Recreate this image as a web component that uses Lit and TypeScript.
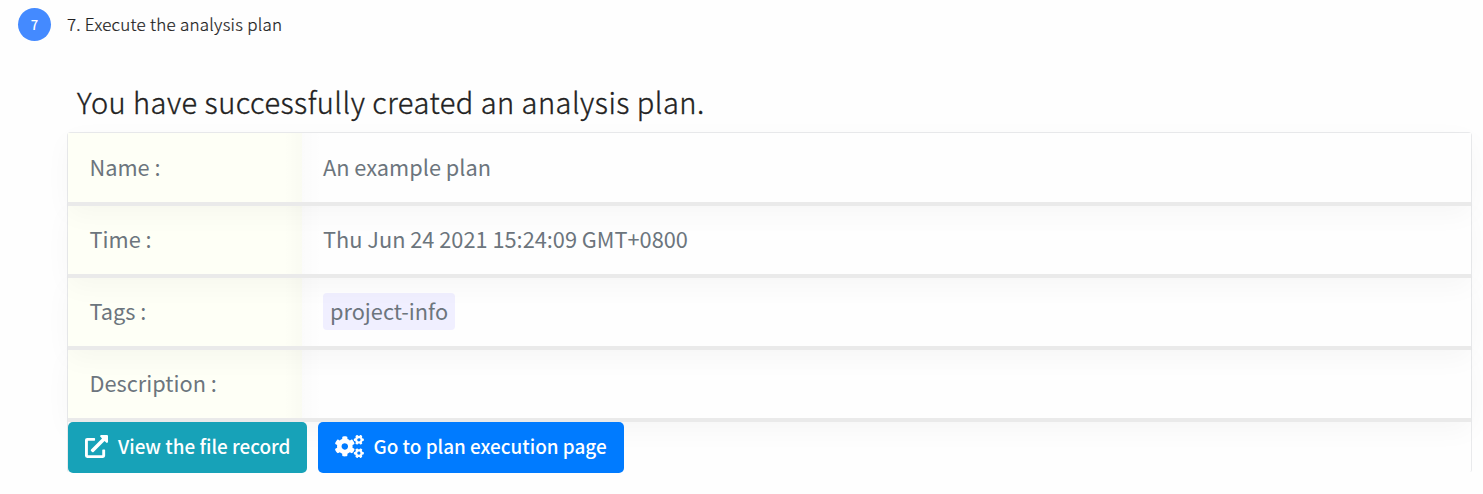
import { LitElement, html, css, svg } from "lit";
import { customElement } from "lit/decorators.js";

const SMALL_GEAR =
  "M512.1 191l-8.2 14.3c-3 5.3-9.4 7.5-15.1 5.4-11.8-4.4-22.6-10.7-32.1-18.6-4.6-3.8-5.8-10.5-2.8-15.7l8.2-14.3c-6.9-8-12.3-17.3-15.9-27.4h-16.5c-6 0-11.2-4.3-12.2-10.3-2-12-2.1-24.6 0-37.1 1-6 6.2-10.4 12.2-10.4h16.5c3.6-10.1 9-19.4 15.9-27.4l-8.2-14.3c-3-5.2-1.9-11.9 2.8-15.7 9.5-7.9 20.4-14.2 32.1-18.6 5.7-2.1 12.1.1 15.1 5.4l8.2 14.3c10.5-1.9 21.2-1.9 31.7 0L552 6.3c3-5.3 9.4-7.5 15.1-5.4 11.8 4.4 22.6 10.7 32.1 18.6 4.6 3.8 5.8 10.5 2.8 15.7l-8.2 14.3c6.9 8 12.3 17.3 15.9 27.4h16.5c6 0 11.2 4.3 12.2 10.3 2 12 2.1 24.6 0 37.1-1 6-6.2 10.4-12.2 10.4h-16.5c-3.6 10.1-9 19.4-15.9 27.4l8.2 14.3c3 5.2 1.9 11.9-2.8 15.7-9.5 7.9-20.4 14.2-32.1 18.6-5.7 2.1-12.1-.1-15.1-5.4l-8.2-14.3c-10.4 1.9-21.2 1.9-31.7 0zm-10.5-58.8c38.5 29.6 82.4-14.3 52.8-52.8-38.5-29.7-82.4 14.3-52.8 52.8z";
const LARGE_GEAR =
  "M386.3 286.1l33.7 16.8c10.1 5.8 14.5 18.1 10.5 29.1-8.9 24.2-26.4 46.4-42.6 65.8-7.4 8.9-20.2 11.1-30.3 5.3l-29.1-16.8c-16 13.7-34.6 24.6-54.9 31.7v33.6c0 11.6-8.3 21.6-19.7 23.6-24.6 4.2-50.4 4.4-75.9 0-11.5-2-20-11.9-20-23.6V418c-20.3-7.2-38.9-18-54.9-31.7L74 403c-10 5.8-22.9 3.6-30.3-5.3-16.2-19.4-33.3-41.6-42.2-65.7-4-10.9.4-23.2 10.5-29.1l33.3-16.8c-3.9-20.9-3.9-42.4 0-63.4L12 205.8c-10.1-5.8-14.6-18.1-10.5-29 8.9-24.2 26-46.4 42.2-65.8 7.4-8.9 20.2-11.1 30.3-5.3l29.1 16.8c16-13.7 34.6-24.6 54.9-31.7V57.1c0-11.5 8.2-21.5 19.6-23.5 24.6-4.2 50.5-4.4 76-.1 11.5 2 20 11.9 20 23.6v33.6c20.3 7.2 38.9 18 54.9 31.7l29.1-16.8c10-5.8 22.9-3.6 30.3 5.3 16.2 19.4 33.2 41.6 42.1 65.8 4 10.9.1 23.2-10 29.1l-33.7 16.8c3.9 21 3.9 42.5 0 63.5zm-117.6 21.1c59.2-77-28.7-164.9-105.7-105.7-59.2 77 28.7 164.9 105.7 105.7z";
const EXTERNAL =
  "M432,320H400a16,16,0,0,0-16,16V448H64V128H208a16,16,0,0,0,16-16V80a16,16,0,0,0-16-16H48A48,48,0,0,0,0,112V464a48,48,0,0,0,48,48H400a48,48,0,0,0,48-48V336A16,16,0,0,0,432,320ZM488,0h-128c-21.37,0-32.05,25.91-17,41l35.73,35.73L135,320.37a24,24,0,0,0,0,34L157.67,377a24,24,0,0,0,34,0L435.28,133.32,471,169c15,15,41,4.5,41-17V24A24,24,0,0,0,488,0Z";

const ROWS = [
  { label: "Name :", value: "An example plan" },
  { label: "Time :", value: "Thu Jun 24 2021 15:24:09 GMT+0800" },
  { label: "Tags :", tag: "project-info" },
  { label: "Description :", value: "" },
];

@customElement("app-root")
export class AppRoot extends LitElement {
  static styles = css`
    :host {
      display: block;
      height: 494px;
      overflow: hidden;
      background: #fefefe;
      font-family: "Noto Sans CJK SC", "Noto Sans", sans-serif;
      color: #212121;
      white-space: nowrap;
    }
    .step {
      display: flex;
      align-items: center;
      gap: 16px;
      height: 33px;
      padding: 8px 0 0 18px;
    }
    .bullet {
      width: 33px;
      height: 33px;
      border-radius: 50%;
      background: #448aff;
      color: #fff;
      font-size: 13px;
      font-weight: 500;
      line-height: 33px;
      text-align: center;
    }
    .step-title {
      font-size: 17px;
      font-weight: 300;
      letter-spacing: 0.25px;
      line-height: 31px;
      height: 33px;
      -webkit-text-stroke: 0.2px #212121;
    }
    .content {
      padding: 39px 11px 0 67px;
    }
    .heading {
      margin: 0;
      padding-left: 10px;
      height: 52px;
      line-height: 42px;
      font-size: 29px;
      font-weight: 300;
      letter-spacing: 0.48px;
      -webkit-text-stroke: 0.35px #212121;
    }
    .card {
      border: 1px solid #e9eaec;
      border-bottom: 0;
      border-radius: 4px 4px 2px 2px;
      height: 339px;
      isolation: isolate;
      display: flex;
      flex-direction: column;
    }
    .row {
      display: grid;
      flex: none;
      grid-template-columns: 234px 1fr;
      height: 68px;
      border-bottom: 4px solid #eaeaea;
      box-shadow: 0 8px 28px rgba(0, 0, 0, 0.035);
      position: relative;
      color: #6c757d;
      font-size: 21.75px;
      line-height: 65px;
    }
    .row:first-child {
      height: 69px;
      line-height: 67px;
      z-index: 4;
    }
    .row:nth-child(2) { z-index: 3; }
    .row:nth-child(3) { z-index: 2; }
    .row:nth-child(4) { z-index: 1; }
    .label {
      padding-left: 21.5px;
      background: linear-gradient(to left, rgba(0, 0, 0, 0.016), transparent 18px), #fefff6;
    }
    .value {
      padding-left: 21px;
      background: linear-gradient(to right, rgba(0, 0, 0, 0.01), transparent 20px), #fefefe;
    }
    .tag {
      display: inline-block;
      height: 37px;
      line-height: 36px;
      padding: 0 7px;
      border-radius: 4px;
      background: #f0efff;
    }
    .actions {
      display: flex;
      flex: none;
      gap: 11px;
      position: relative;
      z-index: 5;
    }
    .btn {
      display: flex;
      align-items: center;
      box-sizing: border-box;
      height: 51px;
      margin: 0;
      padding: 0 17px;
      border: 0;
      border-radius: 5px;
      color: #fff;
      font: 500 18.9px/46px "Noto Sans CJK SC", "Noto Sans", sans-serif;
      white-space: nowrap;
    }
    .btn span { margin-bottom: 3px; }
    .info { background: #17a2b8; width: 239px; }
    .primary { background: #007bff; width: 306px; }
    .icon { height: 23px; fill: #fff; flex: none; margin-bottom: 2px; }
    .external { width: 23px; margin-right: 10px; }
    .gears { width: 29px; margin-right: 9.5px; }
  `;

  render() {
    return html`
      <div class="step">
        <div class="bullet">7</div>
        <div class="step-title"><span>7. Execute the analysis plan</span></div>
      </div>
      <div class="content">
        <h2 class="heading"><span>You have successfully created an analysis plan.</span></h2>
        <div class="card">
          ${ROWS.map(
            (r) => html`<div class="row">
              <div class="label">${r.label}</div>
              <div class="value">${r.tag ? html`<span class="tag">${r.tag}</span>` : r.value}</div>
            </div>`
          )}
          <div class="actions">
            <button class="btn info">
              <svg class="icon external" viewBox="0 0 512 512">${svg`<path d=${EXTERNAL}></path>`}</svg>
              <span>View the file record</span>
            </button>
            <button class="btn primary">
              <svg class="icon gears" viewBox="0 0 640 512">
                ${svg`<path d=${LARGE_GEAR}></path><path d=${SMALL_GEAR}></path><path d=${SMALL_GEAR} transform="translate(0 299)"></path>`}
              </svg>
              <span>Go to plan execution page</span>
            </button>
          </div>
        </div>
      </div>
    `;
  }
}
